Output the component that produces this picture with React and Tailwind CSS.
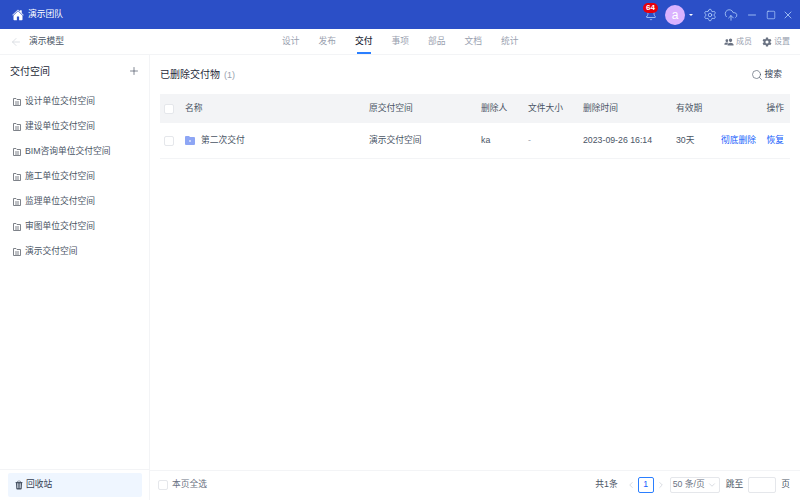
import React from "react";
import { ArrowLeft, Plus, Search, Settings, CloudUpload, Minus, Square, X, ChevronLeft, ChevronRight, ChevronDown, Bell } from "lucide-react";
import { IoHome, IoSettingsSharp, IoPeople, IoTrash } from "react-icons/io5";

const tabs = ["设计", "发布", "交付", "事项", "部品", "文档", "统计"];
const spaces = [
  "设计单位交付空间",
  "建设单位交付空间",
  "BIM咨询单位交付空间",
  "施工单位交付空间",
  "监理单位交付空间",
  "审图单位交付空间",
  "演示交付空间",
];
const columns = "grid grid-cols-[21px_184px_112px_47px_55px_93px_45px_1fr] items-center";

function Checkbox() {
  return <span className="w-2.5 h-2.5 border border-gray-200 rounded-xs bg-white shrink-0" />;
}

function FileIcon() {
  return (
    <svg width="10" height="10" viewBox="0 0 10 10" fill="none" stroke="#71757d" strokeWidth="0.9" className="shrink-0">
      <path d="M1.5 1.5h2.5l1 1h3.5v6h-7z" />
      <path d="M3 5h4M3 7h4" />
    </svg>
  );
}

function App() {
  return (
    <div
      className="w-full h-screen flex flex-col bg-white text-gray-700 text-[8.75px] overflow-hidden"
      style={{ fontFamily: '"Liberation Sans", "Noto Sans CJK SC", sans-serif' }}
    >
      <header className="h-7.25 shrink-0 bg-[#2b4fc7] flex items-center pl-3 pr-1.5 text-white">
        <IoHome className="w-3 h-3" />
        <span className="ml-1">演示团队</span>
        <div className="ml-auto flex items-center text-blue-200">
          <div className="relative">
            <Bell className="w-3 h-3" strokeWidth={1.5} />
            <span className="absolute -top-1.5 -left-0.5 px-0.75 rounded-full bg-red-600 text-white font-bold text-[8px] leading-2.5">64</span>
          </div>
          <span className="ml-2 w-5 h-5 rounded-full bg-purple-300 text-white text-xs flex items-center justify-center">a</span>
          <span className="ml-1 border-x-2 border-t-2 border-x-transparent border-t-white" />
          <Settings className="ml-2.5 w-3.5 h-3.5" strokeWidth={1.25} />
          <CloudUpload className="ml-1.75 w-3.5 h-3.5" strokeWidth={1.25} />
          <Minus className="ml-2 w-3 h-3" strokeWidth={1.5} />
          <Square className="ml-2 w-2.5 h-2.5" strokeWidth={1.5} />
          <X className="ml-1.5 w-3 h-3" strokeWidth={1.5} />
        </div>
      </header>

      <nav className="h-6.5 shrink-0 flex items-center justify-between pl-2.5 pr-2.5 border-b border-gray-100 relative">
        <div className="flex items-center gap-1.75">
          <ArrowLeft className="w-3 h-3 text-gray-300" strokeWidth={1.5} />
          <span className="text-gray-600">演示模型</span>
        </div>
        <div className="absolute inset-y-0 left-70.5 flex gap-4.75">
          {tabs.map((tab) => (
            <span
              key={tab}
              className={
                tab === "交付"
                  ? "relative flex items-center text-gray-800 font-medium"
                  : "flex items-center text-gray-400"
              }
            >
              {tab}
              {tab === "交付" && <span className="absolute inset-x-0.5 bottom-0 h-0.5 bg-blue-500" />}
            </span>
          ))}
        </div>
        <div className="flex items-center gap-2.5 text-gray-400 text-[8px]">
          <span className="flex items-center gap-0.5">
            <IoPeople className="w-2.5 h-2.5 text-gray-500" />
            成员
          </span>
          <span className="flex items-center gap-0.5">
            <IoSettingsSharp className="w-2.5 h-2.5 text-gray-500" />
            设置
          </span>
        </div>
      </nav>

      <div className="flex-1 flex min-h-0">
        <aside className="w-37.5 shrink-0 border-r border-gray-100 flex flex-col">
          <div className="flex items-center justify-between pl-2.5 pr-2.25 h-8">
            <span className="text-[10px] text-gray-800">交付空间</span>
            <Plus className="w-3 h-3 text-gray-700" strokeWidth={1.25} />
          </div>
          <ul className="mt-1.75 flex flex-col gap-2.5 pl-3">
            {spaces.map((space) => (
              <li key={space} className="h-3.75 flex items-center gap-0.75 text-gray-600">
                <FileIcon />
                {space}
              </li>
            ))}
          </ul>
          <div className="mt-auto border-t border-gray-100 pl-2 pr-1.75 pt-0.75 pb-0.75">
            <div className="h-6 rounded-xs bg-blue-50 flex items-center gap-0.5 px-1.5 text-gray-700">
              <IoTrash className="w-2.5 h-2.5 text-gray-600" />
              回收站
            </div>
          </div>
        </aside>

        <main className="flex-1 min-w-0 flex flex-col">
          <div className="flex-1 px-2.5">
            <div className="flex items-center justify-between h-9.75 pr-2">
              <span className="text-[10px] text-gray-800">
                已删除交付物<span className="ml-1 text-[9px] text-gray-400">(1)</span>
              </span>
              <span className="flex items-center gap-0.5 text-gray-700">
                <Search className="w-3 h-3 text-gray-600" strokeWidth={1.25} />
                搜索
              </span>
            </div>
            <div className={`${columns} h-7.25 bg-gray-100 pl-1 text-gray-600`}>
              <Checkbox />
              <span>名称</span>
              <span>原交付空间</span>
              <span>删除人</span>
              <span>文件大小</span>
              <span>删除时间</span>
              <span>有效期</span>
              <span className="text-right pr-1.5">操作</span>
            </div>
            <div className={`${columns} h-9 border-b border-gray-100 pl-1 text-gray-600`}>
              <Checkbox />
              <span className="flex items-center gap-1.5">
                <svg width="10" height="9" viewBox="0 0 10 9" className="shrink-0">
                  <path d="M0 1a1 1 0 0 1 1-1h3l1 1h4a1 1 0 0 1 1 1v6a1 1 0 0 1-1 1h-8a1 1 0 0 1-1-1z" fill="#8ea6f5" />
                  <rect x="4" y="4" width="2" height="2" fill="#c9d5fb" />
                </svg>
                第二次交付
              </span>
              <span>演示交付空间</span>
              <span>ka</span>
              <span className="text-gray-400">-</span>
              <span>2023-09-26 16:14</span>
              <span>30天</span>
              <span className="flex justify-between pr-1.5 text-blue-600">
                <span>彻底删除</span>
                <span>恢复</span>
              </span>
            </div>
          </div>
          <footer className="h-7.5 pb-0.5 shrink-0 border-t border-gray-100 flex items-center pl-2 pr-2.5 text-gray-600">
            <Checkbox />
            <span className="ml-1 text-gray-500">本页全选</span>
            <div className="ml-auto flex items-center">
              <span>共1条</span>
              <ChevronLeft className="ml-2 w-2.5 h-2.5 text-gray-300" />
              <span className="ml-0.5 w-4 h-4 border border-blue-500 rounded-xs text-blue-600 flex items-center justify-center">1</span>
              <ChevronRight className="ml-0.5 w-2.5 h-2.5 text-gray-300" />
              <span className="ml-1 h-4 px-0.5 border border-gray-200 rounded-xs flex items-center text-gray-500">
                50 条/页
                <ChevronDown className="ml-0.5 w-2.5 h-2.5 text-gray-300" />
              </span>
              <span className="ml-1.5">跳至</span>
              <span className="ml-1.25 w-7 h-4 border border-gray-200 rounded-xs" />
              <span className="ml-1.25">页</span>
            </div>
          </footer>
        </main>
      </div>
    </div>
  );
}

export default App;
